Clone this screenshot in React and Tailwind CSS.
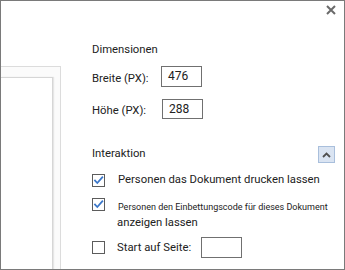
import React from "react";

const font = { fontFamily: "Roboto, 'Liberation Sans', sans-serif" };

function Check({ checked }) {
  return (
    <div className="w-[13px] h-[13px] border border-[#5c5c5c] bg-white shrink-0 flex items-center justify-center">
      {checked && (
        <svg width="11" height="11" viewBox="0 0 11 11">
          <path d="M2 5.5 L4.3 8 L9.3 2.3" fill="none" stroke="#3b77c9" strokeWidth="1.8" strokeLinecap="square" />
        </svg>
      )}
    </div>
  );
}

export default function App() {
  return (
    <div
      className="w-[345px] h-[270px] border border-[#7a7a7a] bg-white flex relative text-[#222] overflow-hidden"
      style={font}
    >
      {/* close */}
      <svg className="absolute left-[325px] top-[4px]" width="10" height="10" viewBox="0 0 10 10">
        <path d="M1 1 L9 9 M9 1 L1 9" stroke="#6a6a6a" strokeWidth="2" />
      </svg>

      {/* left panel */}
      <div className="w-[60px] shrink-0 mt-[65px] border-t border-r border-[#dcdcdc] flex flex-col pt-[10px] bg-[#fbfbfb]">
        <div className="w-[52px] flex-1 bg-white border-t border-r border-[#d6d6d6] shadow-[1px_0_1px_#e6e6e6]" />
      </div>

      {/* right panel */}
      <div className="flex-1 min-w-0 pl-[31px] pr-[9px] pt-[41px] flex flex-col text-[11.3px] leading-[16px] whitespace-nowrap">
        <div>Dimensionen</div>

        <div className="mt-[8px] flex items-start">
          <div className="w-[69px] mt-[5px]">Breite (PX):</div>
          <div className="w-[41px] h-[21px] shrink-0 border border-[#707070] pl-[6px] flex items-center pb-[1px] text-[12px]">476</div>
        </div>

        <div className="mt-[12px] flex items-start">
          <div className="w-[70px] mt-[4px]">Höhe (PX):</div>
          <div className="w-[41px] h-[20px] shrink-0 border border-[#707070] pl-[6px] flex items-center text-[12px]">288</div>
        </div>

        <div className="mt-[27px] flex items-start justify-between h-[17px]">
          <div className="mt-[0px]">Interaktion</div>
          <div className="w-[17px] h-[17px] bg-[#dae4f2] border border-[#a9bfdc] flex items-center justify-center">
            <svg width="9" height="6" viewBox="0 0 9 6">
              <path d="M1 5 L4.5 1.5 L8 5" fill="none" stroke="#505050" strokeWidth="1.8" />
            </svg>
          </div>
        </div>

        <div className="mt-[9px] flex items-center h-[16px]">
          <Check checked />
          <div className="ml-[13px]">Personen das Dokument drucken lassen</div>
        </div>

        <div className="mt-[9px] flex items-start">
          <div className="mt-[1px]">
            <Check checked />
          </div>
          <div className="ml-[13px] flex flex-col">
            <div className="mt-[3px] text-[9px] leading-[14px]">Personen den Einbettungscode für dieses Dokument</div>
            <div className="mt-[1px] -ml-[1px]">anzeigen lassen</div>
          </div>
        </div>

        <div className="mt-[6px] flex items-center h-[21px]">
          <Check />
          <div className="ml-[12px] w-[84px]">Start auf Seite:</div>
          <div className="w-[41px] h-[21px] shrink-0 border border-[#707070]" />
        </div>
      </div>
    </div>
  );
}
